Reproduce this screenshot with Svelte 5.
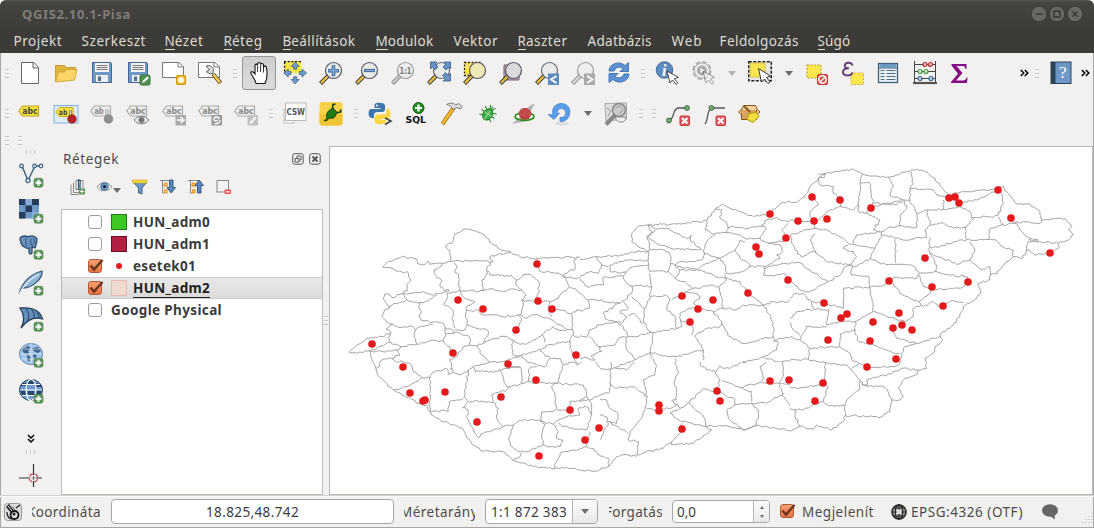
<script>
  // Stretches a label to a fixed advance width by adjusting its letter spacing.
  function fit(node, width) {
    const r = document.createRange();
    r.selectNodeContents(node);
    const natural = r.getBoundingClientRect().width;
    const n = node.textContent.length - (node.querySelector('span') ? 1 : 0);
    node.style.letterSpacing = (width - natural) / n + 'px';
  }

  const menu = [
    ['', 'P', 'rojekt', 48, 20], ['', 'S', 'zerkeszt', 64, 19], ['u', 'N', 'ézet', 39, 20], ['u', 'R', 'éteg', 39, 20],
    ['u', 'B', 'eállítások', 73, 20], ['u', 'M', 'odulok', 58, 20], ['', 'V', 'ektor', 44, 20], ['u', 'R', 'aszter', 50, 20],
    ['', 'A', 'datbázis', 64, 20], ['', 'W', 'eb', 30, 18], ['', 'F', 'eldolgozás', 79, 19], ['u', 'S', 'úgó', 33, 0]
  ];

  const plus = '<rect x="15" y="15.2" width="9" height="9" rx="2" fill="#5a9459" stroke="#417a41" stroke-width=".5"/><path d="M19.500 16.800v6M16.500 19.800h6" stroke="#fff" stroke-width="2"/>';
  const floppy = '<path d="M2.500 1.500h18l1 1v19h-19z" fill="#6f98c8" stroke="#416894"/><rect x="5" y="2" width="14" height="9" fill="#f4f4f4"/><path d="M6.500 4.500h11M6.500 6.500h11M6.500 8.500h11" stroke="#777" stroke-width="1"/><rect x="6" y="14" width="12" height="7" fill="#eee"/><rect x="8" y="15.500" width="3" height="4.500" fill="#4d6f97"/>';
  const lens = (glass, stroke, handle, inner) =>
    `<path d="M1.500 22.500L9 15" stroke="#333" stroke-width="4"/><path d="M2 22L8.800 15.200" stroke="${handle}" stroke-width="2.300"/><circle cx="14.500" cy="9.500" r="8" fill="${glass}" stroke="${stroke}" stroke-width="1.200"/>${inner}`;
  const tag = (fill, stroke, ink, t = 'abc') =>
    `<path d="M.8 9L4.500 4H20.500V14H4.500Z" fill="${fill}" stroke="${stroke}" stroke-width="1.200"/><text x="4.200" y="12.300" font-family="DejaVu Sans" font-weight="bold" font-size="8.600" textLength="${t === 'abc' ? 15.500 : 9.500}" lengthAdjust="spacingAndGlyphs" fill="${ink}">${t}</text>`;
  const gtag = (t) => tag('#eee', '#aaa', '#888', t);
  const cursor = '<path d="M12 10l3 12 2.500-3 3.500 4.300 1.800-1.500-3.500-4 4-1.500z" fill="#fff" stroke="#333" stroke-width=".9"/>';
  const err = '<rect x="14" y="14" width="9.500" height="9.500" rx="1" fill="#db5b60" stroke="#c33b42"/><path d="M16 16l5.500 5.500M21.500 16L16 21.500" stroke="#fff" stroke-width="2"/>';

  const I = {
    new: '<path d="M3.500 1.500H16L20.500 6.500V22.500H3.500Z" fill="#fff" stroke="#666"/><path d="M15 1.500V7H20.500" fill="#eee" stroke="#666"/>',
    open: '<path d="M1.500 20V4.500h9l2 2h9v3" fill="#e1b63e" stroke="#c99d31"/><path d="M1.500 21L4.500 11h6l2-2.500H23L20.500 19Z" fill="#fcd668" stroke="#d2a63a"/>',
    save: floppy,
    saveas: floppy + '<rect x="14" y="14" width="10" height="10" rx="1.500" fill="#4f8f50" stroke="#3b733d"/><path d="M16 22l1-2.500 4.500-4 1.500 1.500-4.500 4z" fill="#fff"/>',
    comp: '<path d="M.5 1.500H17L21.500 6V16.500H.5Z" fill="#fff" stroke="#777"/><path d="M16 1.500V6H21.500" fill="none" stroke="#777"/><rect x="14.500" y="14.500" width="9" height="9" rx="1" fill="#e5b31f" stroke="#c8960f"/><path d="M19 15.500v7M15.500 19h7M16.500 16.500l5 5M21.500 16.500l-5 5" stroke="#fff" stroke-width="1.300"/>',
    compmgr: '<path d="M.5 1.500H17L21.500 6V16.500H.5Z" fill="#fff" stroke="#777"/><path d="M16 1.500V6H21.500" fill="none" stroke="#777"/><path d="M15 13L22.500 22" stroke="#594a1b" stroke-width="4.200"/><path d="M15.500 13.500L22 21.500" stroke="#f0cb55" stroke-width="2.500"/><path d="M8 5l4-.5 3.500 3.500-.5 4-3 1-4-2.500 3.500-1.500z" fill="#ddd" stroke="#666"/>',
    hand: '<path d="M7.500 22.500C7 18 2.500 14 2.300 12c0-2 2.400-1.800 4.200 1V4.500c.3-1.800 2.300-1.800 2.600 0V2.800c.4-1.800 2.700-1.800 3 0V3.500c.5-1.500 2.600-1.300 2.900.4V6c.7-1.500 2.700-1 2.900.5C19 12 19 17 16.500 22.500Z" transform="translate(1.500 0)" fill="#fff" stroke="#111" stroke-width="1.100"/><path d="M10.600 5v6M13.600 4v7M16.500 6v5.500" stroke="#222" fill="none" stroke-width=".9"/>',
    pan: '<rect x="1" y="0" width="17" height="12" fill="#f8e54e"/><path d="M1 .7H18M1.600 1V12.500" stroke="#111" stroke-width="1.300" stroke-dasharray="2 1.700" fill="none"/><path d="M12.200 1l4 4.500h-2.500v2.700h-3V5.500H8.200zM12.200 23l4-4.500h-2.500v-2.700h-3v2.700H8.200zM.8 12l4.500-4v2.500H8v3H5.300V16zM23.500 12L19 8v2.500h-2.700v3H19V16z" fill="#6f99ca" stroke="#3e6793" stroke-width=".8"/>',
    zin: lens('#e8ebe8', '#556', '#f5c33b', '<path d="M14.500 4.200v11M9 9.700h11" stroke="#3c689b" stroke-width="3.600"/><path d="M14.500 5v9.400M9.700 9.700h9.600" stroke="#83a9d6" stroke-width="1.700"/>'),
    zout: lens('#e8ebe8', '#556', '#f5c33b', '<path d="M9 9.500h11" stroke="#3c689b" stroke-width="3.200"/><path d="M9.700 9.500h9.600" stroke="#83a9d6" stroke-width="1.400"/>'),
    z11: '<path d="M1.500 22.500L9 15" stroke="#888" stroke-width="4"/><path d="M2 22L8.800 15.200" stroke="#ccc" stroke-width="2.300"/><circle cx="14.500" cy="9.500" r="8" fill="#eee" stroke="#999" stroke-width="1.200"/><text x="8.500" y="12.600" font-family="DejaVu Sans" font-weight="bold" font-size="8" textLength="12" lengthAdjust="spacingAndGlyphs" fill="#777">1:1</text>',
    zfull: lens('#e8ebe8', '#667', '#f5c33b', '') + '<path d="M3.500 1h6.500L8 3l3 3-3 3-3-3-1.500 2zM23.500 1H17l2 2-3 3 3 3 3-3 1.500 2zM23.500 20H16l2.500-2.500-3-3 3-3 3 3 2-2z" fill="#6795c8" stroke="#3b658f" stroke-width=".9"/>',
    zsel: '<rect x="1.500" y="1.500" width="17" height="13" fill="#fbe64d" stroke="#222" stroke-width="1.300" stroke-dasharray="2 1.500"/>' + lens('#efe9b6', '#556', '#f5c33b', ''),
    zlay: '<path d="M5 4H20V19H5z" fill="#b9a7b5" stroke="#76616f"/>' + lens('#dcd9dc', '#556', '#f5c33b', ''),
    zlast: lens('#e8ebe8', '#667', '#f5c33b', '<rect x="13" y="12.500" width="11" height="11.500" fill="#5d8bbd"/><path d="M21.500 15l-5.500 3.500 5.500 3.500" stroke="#fff" stroke-width="1.900" fill="none"/>'),
    znext: '<path d="M1.500 22.500L9 15" stroke="#888" stroke-width="4"/><path d="M2 22L8.800 15.200" stroke="#ddd" stroke-width="2.300"/><circle cx="14.500" cy="9.500" r="8" fill="#eee" stroke="#999" stroke-width="1.200"/><rect x="13" y="12.500" width="11" height="11.500" fill="#aaa"/><path d="M16 15l5.500 3.500-5.500 3.500" stroke="#fff" stroke-width="1.900" fill="none"/>',
    refresh: '<path d="M2 10C2 3 12-1 18 4.500L21.500 1.500V10.500H13L16 7.500C12 4.500 8 7 7 10Z" fill="#5d92d2" stroke="#2f68ab" stroke-width=".8"/><path d="M22 13C22 20 12 24 6 18.500L2 21.500V12.500H11L8 15.500C12 18.500 16 16 17 13Z" fill="#5d92d2" stroke="#2f68ab" stroke-width=".8"/>',
    ident: '<circle cx="9.500" cy="9" r="8.300" fill="#5b8bbf" stroke="#47739f"/><text x="7" y="14.500" font-family="Liberation Serif" font-style="italic" font-weight="bold" font-size="16" fill="#fff">i</text>' + cursor,
    act: '<circle cx="11" cy="9.500" r="8.800" fill="none" stroke="#aaa" stroke-width="1.600" stroke-dasharray="4.600 2.300"/><circle cx="11" cy="9.500" r="7.600" fill="#eee" stroke="#aaa"/><circle cx="11" cy="9.500" r="5" fill="#aaa"/><path d="M9.500 7v5l4-2.500z" fill="#fff"/><g opacity=".5">' + cursor + '</g>',
    select: '<rect x=".8" y=".8" width="22.500" height="19" fill="#e6e6e6" stroke="#222" stroke-width="1.500" stroke-dasharray="3 1.500"/><rect x="2" y="2" width="15" height="14" fill="#fbe64d" stroke="#c9b02e" stroke-width=".7"/><path d="M10.500 7.500l3 13.500 3-3 3.500 4.500 2-1.500-3.500-4.500 4-1.500z" fill="#fff" stroke="#333"/>',
    desel: '<rect x="2" y="4" width="14" height="13" fill="#fde74c" stroke="#a8973b" stroke-dasharray="2 1.500"/><rect x="12.500" y="13.500" width="10" height="10" rx="1.500" fill="#db4b4b" stroke="#c33"/><circle cx="17.500" cy="18.500" r="3.700" fill="none" stroke="#fff" stroke-width="1.500"/><path d="M15 21l5-5" stroke="#fff" stroke-width="1.300"/>',
    expr: '<rect x="10" y="12" width="12.500" height="11.500" fill="#fde74c" stroke="#c8ae3c" stroke-dasharray="2 1.500"/><path d="M11.500 4.500C10.500.5 4 1 3.800 4.500c0 2 1.800 2.800 4.200 2.800C5 7.300 2 8.500 2 11c0 4.500 8.500 4.500 9.500.5" fill="none" stroke="#6b3d77" stroke-width="2"/>',
    table: '<rect x="1.500" y="2.500" width="19" height="19" fill="#e9f0f5" stroke="#3c627e" stroke-width="1.300"/><rect x="2.500" y="3" width="17" height="3.500" fill="#679bc6"/><path d="M2 7h19" stroke="#3c627e"/><path d="M3.500 9.500h4M3.500 12.500h4M3.500 15.500h4M3.500 18.500h4M9.500 9.500h9M9.500 12.500h9M9.500 15.500h9M9.500 18.500h9" stroke="#4e7187"/>',
    abacus: '<path d="M1.500 0v22M22.500 0v22M1.500 3.500h21M1.500 10.500h21M1.500 17.500h21" stroke="#444" fill="none"/><path d="M0 22h24" stroke="#555" stroke-width="2.200"/><g stroke-width="1.200"><g fill="#f4c4c4" stroke="#b52b2b"><circle cx="12" cy="3.500" r="2"/><circle cx="17.500" cy="3.500" r="2"/></g><g fill="#cfeecb" stroke="#479747"><circle cx="7" cy="10.500" r="2"/><circle cx="13" cy="10.500" r="2"/></g><g fill="#c0d9ef" stroke="#37678d"><circle cx="7" cy="17.500" r="2"/><circle cx="18" cy="17.500" r="2"/></g></g>',
    sum: '<path d="M2.500 3H17.500V8H16.500C16 5.500 15 5 13 5H7.500L13.500 12L7 19.500H14C16 19.500 17 18.500 17.500 16.500H18.500L18 22H2V21L9 12.800L2.500 4.500Z" fill="#850a85"/>',
    help: '<rect x="2" y="1" width="20" height="21.500" fill="#6d98c6" stroke="#2d455d"/><rect x="2" y="1" width="4.500" height="21.500" fill="#2b4257"/><text x="10" y="17" font-family="Liberation Serif" font-size="17" fill="#fff">?</text>',
    lab: tag('#f8e43c', '#c6a51c', '#444'),
    labpin: '<rect x="0" y="3.500" width="24" height="17.500" fill="#deebf8" stroke="#82b0e2"/><path d="M1.800 10L5.500 5.500H19V14.500H5.500Z" fill="#f8e43c" stroke="#c6a51c"/><text x="4.800" y="13" font-family="DejaVu Sans" font-weight="bold" font-size="7.500" textLength="8.500" lengthAdjust="spacingAndGlyphs" fill="#444">ab</text><path d="M16.500 8v7" stroke="#777" stroke-width="2.500"/><path d="M16.500 8.500v6" stroke="#ddd"/><circle cx="18" cy="17" r="4.300" fill="#b82323" stroke="#8a1212" stroke-width=".6"/>',
    glabpin: gtag('ab') + '<path d="M17 7v8" stroke="#999" stroke-width="3"/><path d="M17 7v8" stroke="#eee" stroke-width="1.200"/><circle cx="18.500" cy="17" r="4.700" fill="#8f8f8f"/>',
    glabeye: gtag('abc') + '<path d="M8 18c4-5 11-5 15 0-4 5-11 5-15 0z" fill="#eee" stroke="#777"/><circle cx="15.500" cy="18" r="3" fill="#777"/>',
    glabmov: gtag('abc') + '<rect x="13.500" y="13" width="10.500" height="10.500" fill="#aaa"/><path d="M15 18h6M18.500 15l3.500 3-3.500 3" stroke="#fff" stroke-width="1.600" fill="none"/>',
    glabrot: gtag('abc') + '<rect x="13.500" y="13" width="10.500" height="10.500" rx="1" fill="#999"/><path d="M21.500 17c-1-3-6-2.500-5.500.5.400 2 3 1.800 3.500.3M22 18c0 2.500-2 4-5.500 3.700" stroke="#fff" stroke-width="1.300" fill="none"/>',
    glabedit: gtag('abc') + '<rect x="13.500" y="13" width="10.500" height="10.500" fill="#c2c2c2"/><path d="M15.500 22l1-2.500 4.500-5 1.500 1.500-4.500 5z" fill="#fff"/>',
    csw: '<rect x="1" y="7" width="10" height="14" fill="#fff" stroke="#bbb"/><rect x="2.500" y="1" width="20.500" height="17.500" fill="#fff" stroke="#b9b9b9"/><text x="3.500" y="12.600" font-family="DejaVu Sans" font-size="8.500" font-weight="bold" textLength="18.500" lengthAdjust="spacingAndGlyphs" fill="#555">CSW</text>',
    plug: '<rect x=".5" y="0" width="23" height="23.500" rx="3" fill="#f6d24a"/><path d="M.5 12h23v8.500a3 3 0 0 1-3 3h-17a3 3 0 0 1-3-3z" fill="#efc535"/><path d="M5 18.500c2-.3 2.500-1.500 2.800-3C7 11.500 9 8.500 12.500 7l1-1.500 5 5.500-1.500 1.500c-1 3.500-4 4.500-6.500 3.500-1.200 1.700-3 3-5 2.700z" fill="#1d7a14" stroke="#0c3308" stroke-width=".9"/><path d="M13.500 6.500L14 2.500l2.500-.5M18 10.500l3.500-.5.500-2.500" fill="none" stroke="#153c10" stroke-width="1.600"/>',
    python: '<path d="M11 .7c-4 0-4.500 1.500-4.500 3.300v2h6v1H3.500C1.500 7 .5 9 .5 11.500S2 16 4 16h2v-3c0-2 1.500-3 3.500-3h5C16 10 17 9 17 7V4C17 1.500 15 .7 11 .7z" fill="#3c77ab"/><circle cx="9" cy="3.500" r="1" fill="#fff"/><path d="M18.500 6.500v3c0 2-1.500 3-3.500 3h-5c-2 0-3.500 1-3.500 3V19c0 2 2 3.300 5.500 3.300s6-1 6-3V18h-5v-1h6.500c2 0 3-2 3-4.500s-1-6-3-6z" fill="#fbd747"/><path d="M17 16l6 3-6 3.500" stroke="#444" stroke-width="1.600" fill="none"/>',
    sql: '<circle cx="14.500" cy="6" r="5.500" fill="#1f8c1f" stroke="#135f13"/><path d="M14.500 2.500v7M11 6h7" stroke="#fff" stroke-width="2.200"/><text x="1.500" y="20.500" font-family="DejaVu Sans" font-weight="bold" font-size="9.500" textLength="20.500" lengthAdjust="spacingAndGlyphs" fill="#111">SQL</text>',
    hammer: '<path d="M2.500 22L13.500 6" stroke="#a7740b" stroke-width="4"/><path d="M2.800 21.500L13.500 6" stroke="#f6b92b" stroke-width="2.500"/><path d="M6.500 2.500C10 .5 14 1 15.500 3l3-1.500 3.500 3L20.500 7 17 5.500 13 7.500C12 4.500 10 3.500 6.500 2.500z" fill="#ddd" stroke="#666" stroke-width=".8"/>',
    bug: '<g transform="rotate(35 12 12)"><path d="M5 7l4 2M4 12h5M5 17l4-2M19 7l-4 2M20 12h-5M19 17l-4-2M12 3v5M9 3l2 4M15 3l-2 4" stroke="#168420"/><ellipse cx="12" cy="12.500" rx="4.500" ry="6" fill="#46ad4c" stroke="#168420"/><path d="M12 8v10M8 12h8" stroke="#a1dfa2"/></g>',
    planet: '<path d="M0 22L13 19.500 23 1.500C18 3 14 6 12 11z" fill="#b6b6b6"/><circle cx="13" cy="12" r="6" fill="#bd3f3f"/><ellipse cx="12.500" cy="14.500" rx="9.500" ry="4" fill="none" stroke="#2e8e1f" stroke-width="1.700"/><path d="M6.500 12a6.500 6 0 0 1 13 0c0 4-13 4-13 0z" fill="#c24b4b"/>',
    undo: '<ellipse cx="14" cy="21.500" rx="7" ry="2" fill="#ddd"/><path d="M5 13C3 5 9 1 14 1.500 20 2 23 7 21.500 12.500 20.500 17.500 16 20 12 19.500V15.500C17 16 19 11.500 17 8.500 14 5 9 6.500 9 11.500L11.500 11 6 17.500 0 12.500z" fill="#5a9de8" stroke="#3b7bcb" stroke-width=".7"/>',
    gsearch: '<path d="M1 1.500L22.500 1V17L2 19z" fill="#ddd" stroke="#aaa"/><path d="M2 22.500L11 13" stroke="#888" stroke-width="4"/><circle cx="15" cy="8" r="6.500" fill="#ccc" stroke="#888" stroke-width="1.500"/><path d="M11 6l5-2 3 4-4 4M3 6l4 3-3 5" stroke="#999" fill="none"/><path d="M11 15h11c0 7-9 7-11 0z" fill="#eee" stroke="#888"/>',
    node1: '<path d="M3 18.500C9 17 6 7 12 6H21" stroke="#555" stroke-width="1.300" fill="none"/><circle cx="3" cy="18.500" r="2.400" fill="#75af78" stroke="#356d3a"/><circle cx="21" cy="6" r="2.400" fill="#75af78" stroke="#356d3a"/>' + err,
    node2: '<path d="M3 22C7 17 4 8 10 6H23" stroke="#555" stroke-width="1.300" fill="none"/><circle cx="9.500" cy="6" r="2.400" fill="#75af78" stroke="#356d3a"/>' + err,
    box: '<path d="M3.500 7.500h15v10h-15z" fill="#dba45e" stroke="#8d5010"/><path d="M3.500 8L5.500 3.500H17.500L19.500 8M3.500 7.500L.5 10 3.500 12.500M19.500 7.500l2.500 2.500-3 2.500" fill="#f2d5a3" stroke="#8d5010"/><path d="M6 4l6 6" stroke="#8f5c21" stroke-width="2.200"/><path d="M10.500 12l7.500-2 3 4.500-6 6-6-3z" fill="#f3df3c" stroke="#ad9313"/>',
    vec: '<path d="M3 3L9 17.500 16 3H22" stroke="#3f6284" stroke-width="1.500" fill="none"/><g fill="#dfeaf4" stroke="#3f6284" stroke-width="1.200"><circle cx="2.500" cy="3" r="1.800"/><circle cx="9" cy="17.500" r="2.100"/><circle cx="15.500" cy="3" r="1.800"/><circle cx="22" cy="3" r="1.800"/></g>' + plus,
    ras: '<rect y="0" width="20" height="19.500" fill="#6e99c9"/><path d="M0 0h6.500v6H0zM13 0h7v6h-7zM6.500 6.500H13v6.500H6.500zM0 13h6.500v6.500H0z" fill="#243d58"/><path d="M6.500 0H13v6H6.500zM13 13h7v6.500h-7z" fill="#88aed8"/>' + plus,
    pg: '<path d="M1 3C4 0 8 1 9 2c3-2 8-1 9 2 0 4-1 6-2 9l-3-1v6c-1 2-3 1-3-1v-4C7 14 6 12 6 12c-3 0-5-5-5-9z" fill="#6992bd" stroke="#2c4d6f" stroke-width="1.300"/><path d="M7 3c-1 4 0 6 1 8M12 4c-1 4 0 6 2 7M14 3c2 2 2 4 0 6" fill="none" stroke="#2c4d6f"/>' + plus,
    spl: '<path d="M0 23C3 12 9 4 23 0 24 7 14 17 4 17" fill="#8fb5d8" stroke="#3b5b7a" stroke-width="1.300"/><path d="M0 23C5 14 12 7 20 3" stroke="#e7f1fa" stroke-width="1.300" fill="none"/>' + plus,
    sail: '<path d="M1 1C12 0 21 3 23.500 12 15 9 8 13 2 21 6 14 5 7 1 1z" fill="#638ebb" stroke="#24425f" stroke-width="1.300"/><path d="M7 1.500c3 5 3 8 2 12M13 3c2 3 3 6 2 8M18 5.500c2 2 2 4 2 5" stroke="#24425f" fill="none"/>' + plus,
    wms: '<ellipse cx="12" cy="11" rx="11.500" ry="10.500" fill="#a9c8e9" stroke="#5a84b1"/><path d="M3 6l6-3 3 2-3 3 1 2-3 1-3-2zM8 12l3 1 1 2-2 4-2-3zM13 5l6-1 3 4-3 2-3-1-2-2zM14 11l4 1-2 4-2-3z" fill="#3f658b"/><path d="M1 11h22M12 0v21M2.500 6h19M2.500 16h19" stroke="#d5e4f4" stroke-width=".7"/>' + plus,
    wfs: '<ellipse cx="12" cy="11" rx="11.500" ry="10.500" fill="#6f9bcf" stroke="#203c57"/><path d="M4 4h4v3H2zM9 1h6v5H9zM17 4l4 1 2 3h-6zM1 11h6v5H3zM9 12h6v4H9zM17 11h6l-2 5h-4z" fill="#27486a"/><path d="M1 11h22M3 5.500h18M3 16.500h18" stroke="#fff" stroke-width="1.100"/><ellipse cx="12" cy="11" rx="5" ry="10.500" fill="none" stroke="#fff" stroke-width="1.100"/>' + plus,
    cross: '<path d="M0 14H11M17 14H23M14.500 0V11M14.500 17V23" stroke="#333" stroke-width="1.200"/><circle cx="14.500" cy="14" r="4.200" fill="none" stroke="#cc4545" stroke-width="1.300" stroke-dasharray="4.200 2.400" stroke-dashoffset="-1.200"/><path d="M14.500 12v4M12.500 14h4" stroke="#333" stroke-width=".6"/>',
    grp: '<path d="M1 5.500v10h8M3.500 3.500v10h8M6 1.500h7v9H6z" fill="none" stroke="#888"/><path d="M8.500 0v11M8.500 1c4 0 0 5 2 9" stroke="#37638c" stroke-width="1.300" fill="none"/><rect x="9" y="9.500" width="6" height="6" rx="1" fill="#5a9459"/><path d="M12 10.500v4M10 12.500h4" stroke="#fff"/>',
    vis: '<path d="M0 8C4 2 11 2 15 8 11 13 4 13 0 8z" fill="#eee" stroke="#999"/><circle cx="7.500" cy="7.500" r="3.800" fill="#6f9bc9" stroke="#4a6e93"/><circle cx="7.500" cy="7.500" r="1.500" fill="#111"/>',
    filt: '<path d="M1 3h14l-5 6v6l-3.500-1V9z" fill="#6e98c7" stroke="#416790"/><path d="M.5 1h14.500v3H.5z" fill="#f5da3a" stroke="#bda122" stroke-width=".6"/>',
    expd: '<path d="M0 1.500h11M2.500 2v12h2M2.500 6h2" stroke="#888" fill="none"/><path d="M4.500 4.500h2.500V7H4.500zM4.500 11h2.500v2.500H4.500z" fill="#fff3c4" stroke="#eb9d21" stroke-width="1.300"/><path d="M9.500 1h3.500v7.500h2.500L11.200 14 7 8.500h2.500z" fill="#5887b9" stroke="#345c84"/>',
    coll: '<path d="M0 1.500h11M2.500 2v12h2M2.500 6h2" stroke="#888" fill="none"/><path d="M4.500 4.500h2.500V7H4.500zM4.500 11h2.500v2.500H4.500z" fill="#fff3c4" stroke="#eb9d21" stroke-width="1.300"/><path d="M9.500 14h3.500V6.500h2.500L11.200 1 7 6.500h2.500z" fill="#5887b9" stroke="#345c84"/>',
    rem: '<rect x="1" y="1.500" width="11.500" height="11.500" fill="#f4f4f4" stroke="#888"/><rect x="8.500" y="10.500" width="6.500" height="4.500" rx="1" fill="#e34f4f"/><path d="M9.800 12.800h4" stroke="#fff" stroke-width="1.200"/>'
  };

  const row1 = ['|12', 'new', 'open', 'save', 'saveas', 'comp', 'compmgr', '|13', '*hand', 'pan', 'zin', 'zout', 'z11', 'zfull', 'zsel', 'zlay', 'zlast', 'znext', 'refresh', '|12', 'ident', 'act', '-21', 'select', 'v21', 'desel', 'expr', 'table', 'abacus', 'sum'];
  const row2 = ['|12', 'lab', 'labpin', 'glabpin', 'glabeye', 'glabmov', 'glabrot', 'glabedit', '|13', 'csw', 'plug', '|13', 'python', 'sql', 'hammer', 'bug', 'planet', 'undo', 'v20', 'gsearch', '|13', '|13', 'node1', 'node2', 'box'];
  const side = ['vec', 'ras', 'pg', 'spl', 'sail', 'wms', 'wfs'];
  const layers = [
    { name: 'HUN_adm0', w: 77, sw: '#3dc922', bd: '#23791a' },
    { name: 'HUN_adm1', w: 77, sw: '#b31f43', bd: '#661028' },
    { name: 'esetek01', w: 63, on: true, dot: true },
    { name: 'HUN_adm2', w: 77, on: true, sw: '#efd9d1', bd: '#ddbdb1', sel: true },
    { name: 'Google Physical', w: 111 }
  ];

  // Boundary lines, three units per pixel, grouped by map sheet with its own origin.
  // `area` is the part of the map that a sheet is responsible for.
  const sheets = [
    { id: 'west', area: 'M330 147H580V362H600V494H330Z', ox: 340, oy: 215, d: `128,156 140,144 165,133 187,124 205,130 228,131 232,145 252,150 264,138 269,148 306,145 332,139 440,137 450,145
332,139 330,108 317,92 336,85 344,57 370,42 400,47 425,56 447,72 457,86 470,92 490,106 510,110 540,125 575,130 640,128 690,126 745,131 780,125
510,112 455,122 450,132 460,140 445,152 440,165
128,156 150,158 175,170 202,170 213,197 199,210 202,228 188,235
133,238 150,240 162,248 172,238 188,235 205,236 250,230 280,240 296,236 326,224
133,238 130,252 143,270 147,280 133,285 125,304 140,322 157,327 138,341 152,352 135,362 113,368 80,370 55,388 28,412 50,415 88,407 120,395 150,382 145,368 152,352
188,235 200,254 193,260 172,266 150,272 147,280
200,254 220,262 240,262 262,258 290,240
240,262 238,282 245,290 237,305 252,318 278,322 310,325 315,338 338,345
326,224 322,245 310,268 328,276 340,295 335,310 345,340
157,327 180,338 215,333 228,345 240,335 278,328
228,345 222,365 230,387
315,338 318,360 310,378 270,377 230,388 185,395 150,382
338,345 343,355 320,355
344,352 360,355 388,365 392,378 388,390 370,395 350,425 330,432 335,450 337,465
310,378 320,390 330,395 332,415
306,145 300,155 282,165 285,178 305,195 300,215 322,228
342,142 350,160 345,172 357,180 355,205 362,232
440,165 440,180 425,195 432,222 420,228 362,228 326,235
440,165 450,180 475,178 495,185 515,182 530,195 528,210 545,225 558,240 545,255 550,270 545,285 540,300
420,225 450,222 490,230 520,222 545,225
362,232 375,250 405,262 383,272 380,285 400,290 415,285 430,300 465,300 490,305 520,303 545,300
380,285 378,310 382,330 375,345 345,345
382,330 410,340 440,343 445,355 432,378 430,385
545,300 560,310 580,298 625,310 635,315 660,330 680,343
530,195 550,178 572,178 590,195 597,200 595,235 592,258
591,130 590,145 597,160 607,172 640,172 670,184 680,195 688,215 660,240 655,250 632,260 610,260 592,258
688,215 700,220 720,235 745,252 745,275 710,285 695,295 697,345
592,258 560,258 545,255
632,260 625,285 635,305
632,285 660,285 695,295
670,184 690,165 705,163 702,140 712,130
670,184 700,190 720,187 745,210 740,235 780,225
697,345 660,347 640,335 620,345 605,360 615,382
697,345 700,360 690,375 690,400 700,420 712,450 725,440 750,430 780,430
700,360 725,368
520,360 530,345 545,315 535,300
430,385 460,370 500,363 520,375 540,388 570,382 605,360
388,390 412,392 430,385
412,392 425,420 450,442 500,437 545,420 590,408 625,390 690,380
520,375 515,400 520,420 545,422
450,442 420,450 400,455 405,470 440,468 460,472 478,465 500,460 540,455
330,460 340,472 360,480 385,465 400,455
185,395 170,405 180,420 155,430 170,440 190,440 215,450 218,465 245,488 270,488
88,407 95,430 108,460 118,455 125,435 155,430
88,407 130,410 170,405
108,460 112,480 135,500 160,525 185,540 205,548 235,565 262,575 275,600 300,615 340,630 368,640 378,660 392,680 420,705 455,710 490,710 510,725 520,738 560,748 600,757 645,760 680,757 720,765 765,768 805,755
160,525 200,515 245,488
270,488 270,520 268,570 270,590 325,588 328,560 370,550
270,488 280,470 320,460 325,478 340,472
385,465 380,500 372,545 385,560 425,558 460,562
385,560 368,578 385,585 382,610 405,655 415,668 430,655 490,635
460,562 455,540 480,530 500,525 510,515
478,465 490,490 500,515 530,512 545,505 545,470 540,455 520,455 500,460
460,562 475,580 470,610 490,635 520,630
545,422 560,440 590,448 615,455 630,430 600,408
630,430 660,430 670,450 660,475 655,500
670,450 700,440 712,450
545,505 567,500 568,460 590,455
567,500 585,505 650,505 730,510 740,545 720,560
655,500 635,515 645,545 650,580 640,590 605,590 600,620
520,630 540,615 600,615 615,628 605,665 608,690 580,700 565,710 535,710 510,690 508,665 520,630
520,735 540,725 545,712
600,620 640,628 655,615 690,602 720,600 715,580 740,575
640,628 655,650 650,670 668,675 660,695 630,695 608,690
655,625 690,640 740,645 755,600 740,575
650,585 690,585 690,560 750,555 780,540
740,545 755,570 755,600
750,650 740,695 700,705 660,715 650,740 640,760
740,695 760,700 775,720 805,730
765,440 775,455 815,460` },
    { id: 'mid', area: 'M580 147H790V362H580Z', ox: 560, oy: 150, d: `40,329 60,328 110,320 150,318 190,315 215,305 265,305 245,295 215,275 215,250 235,228 265,225 350,222 440,212 465,178 490,163 510,175 540,185 560,192 580,200 630,192 660,160 690,155
265,225 290,238 320,235 350,250 380,265 395,255 390,270 410,290 425,300
265,225 275,245 260,262 268,285 265,305
285,240 262,262 300,285 340,297 425,300
440,212 435,240 465,252 500,248 505,230 495,215 480,205 485,180 465,178
465,252 440,275 430,300 435,312 425,330 385,335 360,335 345,345
500,230 560,235 605,230 620,210 650,202 680,215 690,213
500,248 540,255 555,265 600,265 620,235 605,225
555,275 540,270 525,300 490,320
525,300 540,325 560,335 570,350 545,365 500,370 495,345 480,325
430,305 450,318 480,325 490,320
600,265 625,280 670,275 675,250 665,240 685,220
625,280 660,285 668,305 650,315 660,325 640,335 615,350 570,350
615,350 610,375 640,378 670,370 690,390
610,355 640,345 690,340
265,305 265,350 270,365 325,365 332,345 330,310 300,298 270,300
265,330 200,330 150,345 150,365 180,370 200,365 220,350 265,345
110,320 125,345 145,350
40,365 60,378 90,365 115,370 125,345
130,382 190,378 200,365
190,380 200,400 215,408 275,410 270,370
215,408 215,430 180,460 110,450 85,450
130,382 130,405 105,405 80,410 60,385
85,450 60,430 30,410
85,450 88,475 40,490
40,555 80,562 88,540 120,525 170,515 185,525 205,560 220,560 275,548
180,460 150,475 130,490 135,505 185,520 200,500 180,485 205,475 190,455
215,440 255,478
205,498 220,490 250,520
275,410 270,440 255,475 250,510 270,545 280,548
270,440 320,437 330,450 320,480 345,500 350,535 280,548
325,365 345,385 380,400 398,415 415,415 450,405 475,410 485,440 490,475 460,485
345,350 360,360 345,385
360,360 410,358 440,370 495,385 540,395 565,430 610,465
332,340 360,350 410,358 440,340 480,325
398,415 370,430 335,450
375,425 398,428 420,440 400,460 415,475 385,475 360,490 362,510 390,520 400,535 395,555
415,475 460,485 485,515 480,530 440,535 405,558 430,600
350,535 365,530 362,510
485,520 510,560 545,580 580,575 610,565 640,560 640,520 625,490 610,465 550,465 530,478 490,475
495,370 500,390 478,410
610,465 640,455 685,455 705,430
430,600 350,620 330,620 270,608
280,548 278,580 270,608 225,628 200,600 200,562
270,608 290,650
640,560 655,580 650,600 610,620 580,630 540,640
430,630 430,600
610,620 650,635 720,628
640,575 655,565 720,560
88,560 115,590 165,585 175,565 205,560
40,625 75,622 105,630 95,615 125,605 115,590
200,640 225,628
345,625 355,665` },
    { id: 'south', area: 'M600 362H790V494H600Z', ox: 500, oy: 360, d: `335,-5 330,45 330,95 300,105 285,110 250,125
330,70 345,85 400,80 415,92 440,110
345,25 380,30 410,0
295,25 335,27 380,8 405,-2
450,-22 470,20 465,45 430,60 442,110 435,150 415,185 390,220 385,240 415,245 410,285
440,145 470,150 520,140 535,130
525,-5 535,35 525,60 530,120 515,122 540,145 565,128 610,85 640,95
540,145 510,160 545,185 570,188 620,200 615,175 565,128
610,0 600,15 620,30 645,35
760,0 720,10 690,25 675,25 660,18 645,35
645,35 660,60 650,90 680,110 705,118 705,135
665,60 720,82 755,95 755,125
720,82 780,68 790,55 780,20 800,5
850,0 850,40 840,70
785,68 840,72 870,75
838,75 850,110 885,150 885,178 895,198
850,100 800,130 755,130 705,135
705,135 680,150 685,175 730,210 770,195 775,150 755,130
285,333 325,320 350,290 375,283 408,290 440,275 490,265 515,245 515,255 580,250 635,210 620,200 680,197 730,210 770,197 830,205 870,213 900,198
515,245 540,220 545,190
290,115 320,120 330,145 355,160 350,190 325,185 385,220
300,165 320,170 325,190 310,215 300,240 275,240
265,125 270,150 290,165
275,240 280,260 290,285 325,295 325,320` },
    { id: 'east', area: 'M790 147H1092V494H790Z', ox: 790, oy: 150, d: `-30,160 0,155 20,157 50,130 60,110 85,85 100,70 145,65 190,57 215,70 250,78 290,82 320,75 350,65 380,57 400,62 435,85 460,118 475,135 520,125 600,120 640,108 650,125 680,162 720,162 745,180 755,210 825,205 845,230 835,240 850,255 830,272 805,280 750,275 715,270
805,280 808,292 780,310 740,315 710,300 698,325 670,320 640,345 620,372 600,375 600,390 565,400 572,430 545,455 520,470 510,500 490,525 450,555 458,570 435,590 430,610 405,625 410,655 385,660 380,675 345,685 325,715 340,740 330,750 305,750 300,785 265,803 220,797 165,797 160,815 125,840 80,825 70,838 30,828 0,843 -30,835
710,300 715,275 745,270
85,75 107,72 103,82 85,83 90,105 130,110 130,130 150,150 155,170 190,180 205,165 210,100 215,70
210,100 240,100 243,130 250,155 243,175 230,190 205,185 205,165
155,170 110,185 90,205 70,215 60,200 65,180 85,165 75,145
-10,210 20,212 72,213 75,235 110,240 160,265 175,280 200,285 255,295
75,235 40,240 0,258 15,300 35,322 65,305 80,310 60,270 75,250
80,310 110,335 180,345 200,320 190,305 160,295 175,285
243,175 285,160 340,150 360,150
250,160 300,165 340,155
295,82 310,105 300,135 340,150 350,175 330,200 330,228 380,232 380,190 360,150 360,115 370,100 365,65
230,190 270,210 250,240 275,245 300,230 330,228
275,245 275,260 255,295 240,325 200,350 185,345
190,280 200,255 250,250 270,243
275,255 310,262 340,270 410,262 405,240 420,225 410,180 380,190
360,115 430,120 440,135 475,140
410,180 460,178 510,170 540,185 550,205 530,230 490,235 460,218 420,225
460,150 460,178
510,160 560,150 600,130 620,122
545,205 580,198 610,202 625,195 640,160 630,125
525,230 530,270 490,275 445,292 420,292 418,262
530,270 615,268 635,290 670,300 665,320
595,268 600,235 640,225 680,220 700,250 720,265 745,270
625,200 640,225
660,215 750,220 755,210
418,292 420,310 460,325 500,343 540,330 555,300 540,275
540,330 575,360 600,350 603,375
315,268 318,340
240,325 270,340 365,345 388,370 380,385 310,383 300,395 275,408 240,412
388,370 440,365 500,380 520,375 545,395 510,415 430,418 400,410 385,375
420,310 440,345 437,365
310,400 330,430 385,455 420,430 425,410
385,455 400,470 430,455 445,470 490,452 520,458
240,412 235,378 185,375 185,345 165,350 150,375 115,395 60,425 30,420 0,390
0,340 30,338 60,360 115,395
240,412 160,415 160,475 100,458 65,455 40,430 15,430 -5,450
240,412 250,485 195,515 150,515 110,525 115,480 70,475 65,455
250,485 345,515 370,500 370,475 395,465
195,515 195,540 205,575 245,582 290,600 330,612
195,540 150,552 150,590 180,610 185,630 240,652 310,650 330,640 335,610 345,590 380,580 450,558
310,545 320,565 380,580
150,590 60,595 30,570 50,530 110,530
60,595 55,628 105,638 165,645 185,660 210,690 210,715 175,745 165,765 165,797
105,638 105,700 115,710 100,755 120,768 165,765
0,630 55,628
185,655 205,640
230,690 300,672 335,655 385,660
210,695 230,710 230,690
215,705 285,712 305,750
-25,705 20,715 50,712 105,700
0,778 40,780 100,755
15,780 15,800 30,828
30,570 0,560 -35,560
-5,510 20,485 70,478
-5,510 10,540 30,555` }
  ];

  let seed = 7;
  const rnd = () => ((seed = (seed * 16807) % 2147483647) / 2147483647) - 0.5;

  // Breaks every stretch into short crooked steps so that borders look surveyed.
  function rough(line) {
    const p = line.trim().split(' ').map((s) => s.split(',').map(Number));
    let out = 'M' + p[0].join(' ');
    for (let i = 1; i < p.length; i++) {
      const [a, b] = p[i - 1];
      const [c, d] = p[i];
      const len = Math.hypot(c - a, d - b);
      const n = Math.max(1, Math.round(len / 7));
      for (let k = 1; k < n; k++) {
        const t = k / n;
        out += `L${(a + (c - a) * t + rnd() * 6).toFixed(1)} ${(b + (d - b) * t + rnd() * 6).toFixed(1)}`;
      }
      out += `L${c} ${d}`;
    }
    return out;
  }
  const land = sheets.map((s) => ({ ...s, path: s.d.split('\n').map(rough).join('') }));

  const cases = [
    [537, 264], [458, 300], [483, 309], [538, 301], [552, 309], [516, 330], [372, 344], [453, 353], [403, 367], [508, 364],
    [576, 355], [536, 380], [410, 393], [423, 401], [425, 400], [445, 392], [501, 397], [477, 422], [570, 410], [599, 428], [585, 440],
    [539, 456], [770, 214], [798, 221], [814, 221], [827, 219], [812, 197], [840, 200], [871, 208], [786, 238], [756, 247],
    [759, 254], [788, 280], [748, 293], [713, 300], [682, 296], [698, 309], [690, 322], [717, 391], [720, 401], [659, 405],
    [659, 411], [682, 429], [770, 381], [789, 380], [823, 383], [815, 401], [949, 198], [955, 197], [959, 203], [998, 190],
    [1011, 218], [1050, 253], [925, 258], [889, 281], [932, 287], [968, 282], [943, 306], [824, 303], [841, 318], [847, 314],
    [899, 313], [873, 322], [893, 328], [902, 325], [912, 330], [828, 340], [870, 341], [896, 359], [867, 367]
  ];
</script>

{#snippet icon(name, size = 24)}
  <svg width={size} height={size} viewBox="0 0 {size} {size}">{@html I[name]}</svg>
{/snippet}

{#snippet tools(items)}
  {#each items as it}
    {#if it[0] === '|'}
      <span class="grip" style="width:{it.slice(1)}px"><i></i></span>
    {:else if it[0] === 'v' && it.length < 4 || it[0] === '-'}
      <span class="drop" class:dim={it[0] === '-'} style="width:{it.slice(1)}px"><i></i></span>
    {:else}
      <span class="btn" class:pressed={it[0] === '*'}>{@render icon(it.replace('*', ''))}</span>
    {/if}
  {/each}
{/snippet}

{#snippet check(on)}
  <span class="check" class:on>
    {#if on}<svg width="18" height="16" viewBox="0 0 18 16"><path d="M3.500 7.500l3.500 4L15.500 2" fill="none" stroke="#6b3621" stroke-width="2.500" /></svg>{/if}
  </span>
{/snippet}

{#snippet more()}
  <svg width="9" height="8" viewBox="0 0 9 8"><path d="M.8 1l3 3-3 3M4.800 1l3 3-3 3" fill="none" stroke="#000" stroke-width="1.500" /></svg>
{/snippet}

<div class="window">
  <div class="title">
    <b use:fit={109}>QGIS2.10.1-Pisa</b>
    <span class="wbtns">
      <svg width="54" height="18" viewBox="0 0 54 18">
        <g fill="#6a6863" stroke="#31302c" stroke-width=".7"><circle cx="8" cy="9" r="7.700" /><circle cx="26" cy="9" r="7.700" /><circle cx="44" cy="9" r="7.700" /></g>
        <path d="M4.500 9h7M23 6h6v6h-6zM41.500 6.500l5 5M46.500 6.500l-5 5" fill="none" stroke="#34332f" stroke-width="1.300" />
      </svg>
    </span>
  </div>
  <div class="menu">
    {#each menu as [u, a, rest, w, gap]}
      <span class="mi" style="width:{w + gap}px"><span use:fit={w}><span class:u={u}>{a}</span>{rest}</span></span>
    {/each}
  </div>
  <div class="bar">
    {@render tools(row1)}
    <span class="end">{@render more()}<span class="grip g2"><i></i></span><span class="btn">{@render icon('help')}</span>{@render more()}</span>
  </div>
  <div class="bar second">{@render tools(row2)}</div>
  <div class="strip"><span class="grip g3"><i></i></span><span class="grip g4"><i></i></span></div>

  <div class="main">
    <div class="side">
      <span class="hgrip"></span>
      {#each side as s}<span class="btn">{@render icon(s)}</span>{/each}
      <svg class="down" width="8" height="10" viewBox="0 0 8 10"><path d="M1 1l3 3 3-3M1 5l3 3 3-3" fill="none" stroke="#000" stroke-width="1.500" /></svg>
      <span class="hgrip low"></span>
      <span class="btn">{@render icon('cross')}</span>
    </div>
    <div class="dock">
      <div class="dtitle">
        <span use:fit={56}>Rétegek</span>
        <svg width="29" height="12" viewBox="0 0 29 12"><g fill="none" stroke="#555"><rect x=".7" y=".7" width="10.500" height="10.500" rx="2" /><rect x="17.700" y=".7" width="10.500" height="10.500" rx="2" /><path d="M3 5.500h4v3.500H3zM5 5.500V3h4v4H7" /><path d="M20.500 3.500l5 5M25.500 3.500l-5 5" stroke-width="2" /></g></svg>
      </div>
      <div class="dtools">
        {@render icon('grp', 16)}
        <span class="eye">{@render icon('vis', 16)}<i></i></span>
        {@render icon('filt', 16)}{@render icon('expd', 16)}{@render icon('coll', 16)}{@render icon('rem', 16)}
      </div>
      <div class="tree">
        {#each layers as l}
          <div class="layer" class:sel={l.sel}>
            {@render check(l.on)}
            {#if l.dot}<span class="dot"><i></i></span>{:else if l.sw}<span class="swatch" style="background:{l.sw};border-color:{l.bd}"></span>{/if}
            <b use:fit={l.w}>{l.name}</b>
          </div>
        {/each}
      </div>
    </div>
    <div class="split"><span class="grip g5"><i></i></span></div>
    <div class="map">
      <svg width="762" height="347" viewBox="330 147 762 347">
        {#each land as s}
          <clipPath id={s.id}><path d={s.area} /></clipPath>
          <g clip-path="url(#{s.id})">
            <path d={s.path} transform="translate({s.ox} {s.oy}) scale(.33333)" fill="none" stroke="#a0a0a0" stroke-width="2.900" stroke-linejoin="round" />
          </g>
        {/each}
        {#each cases as [x, y]}<circle cx={x} cy={y} r="3.800" fill="#e31a1c" />{/each}
      </svg>
    </div>
  </div>

  <div class="status">
    <svg class="mouse" width="18" height="18" viewBox="0 0 18 18"><rect x=".5" y=".5" width="17" height="17" rx="3" fill="#ddd" stroke="#999" /><path d="M2 4l3-3 5 4 2 5-4 1z" fill="#222" /><path d="M4 3l4 5M6 2l4 5" stroke="#eee" /><circle cx="10.500" cy="12" r="4" fill="#ddd" stroke="#111" stroke-width="1.800" /><circle cx="10" cy="11" r="1.500" fill="#222" /><path d="M3 9c0 4 2 7 6 7M12 5l4-3" stroke="#222" stroke-width="1.300" fill="none" /></svg>
    <span class="clip c1"><span use:fit={74}>Koordináta</span></span>
    <span class="field coord"><span use:fit={93}>18.825,48.742</span></span>
    <span class="clip c2"><span use:fit={78}>Méretarány</span></span>
    <span class="field combo"><span use:fit={76}>1:1 872 383</span><em><i></i></em></span>
    <span class="clip c3"><span use:fit={58}>Forgatás</span></span>
    <span class="field spin"><span use:fit={19}>0,0</span><em><i class="up"></i><i></i></em></span>
    <span class="scheck">{@render check(true)}</span>
    <span class="show"><span use:fit={72}>Megjelenít</span></span>
    <svg class="globe" width="16" height="16" viewBox="0 0 16 16"><circle cx="8" cy="8" r="7" fill="#aaa" stroke="#222" stroke-width="1.500" /><path d="M1 8h14M8 0v16M3 4h10M3 12h10" stroke="#222" stroke-width="1.100" /><ellipse cx="8" cy="8" rx="3.800" ry="7" fill="none" stroke="#222" stroke-width="1.100" /><rect x="5.500" y="5.500" width="5" height="4.500" fill="#ddd" /></svg>
    <span class="epsg"><span use:fit={112}>EPSG:4326 (OTF)</span></span>
    <svg class="bubble" width="17" height="16" viewBox="0 0 17 16"><ellipse cx="8" cy="6.500" rx="8" ry="6.200" fill="#666" /><path d="M8 12l5 3.500-.5-5z" fill="#666" /></svg>
    <svg class="size" width="12" height="12" viewBox="0 0 12 12"><path d="M10 1v1M7 4v1M10 4v1M4 7v1M7 7v1M10 7v1M1 10v1M4 10v1M7 10v1M10 10v1" stroke="#bbb" stroke-width="1.200" /></svg>
  </div>
</div>

<style>
  :global(body) { background: #fff; }
  .window {
    width: 1094px; height: 528px; box-sizing: border-box; overflow: hidden; display: flex; flex-direction: column;
    background: #f2f1f0; color: #4c4c4c; border-radius: 6px 6px 0 0; white-space: nowrap;
    font-family: "Noto Sans", "Open Sans", sans-serif; font-size: 13.5px; box-shadow: inset 1px 0 #a8a6a3, inset -1px 0 #a8a6a3, inset 0 -1px #a8a6a3;
  }
  .window span, .window b { flex: none; }
  .title { height: 27px; display: flex; align-items: center; justify-content: space-between; padding: 1px 9px 0 22px; background: linear-gradient(#55534c 0 1px, #45443f 2px, #3e3d39); color: #807d78; box-sizing: border-box; }
  .title b { font-size: 13px; }
  .wbtns { display: flex; }
  .menu { height: 26px; display: flex; align-items: center; padding-left: 13.5px; background: #3c3b37; color: #dfdbd2; line-height: 18px; }
  .mi { display: block; margin-top: 2px; }
  .u { display: inline-block; line-height: 15px; border-bottom: 1px solid #dfdbd2; letter-spacing: 0; }
  .bar { height: 40px; flex: none; display: flex; align-items: center; }
  .second { height: 41px; }
  .btn { width: 36px; height: 36px; display: flex; align-items: center; justify-content: center; box-sizing: border-box; }
  .pressed { width: 34px; height: 34px; margin: 0 1px; background: linear-gradient(#d0cecc, #dddbd9); border: 1px solid #989593; border-radius: 3px; }
  .btn svg, .dtools svg { display: block; overflow: visible; }
  .grip { display: flex; align-items: center; justify-content: center; }
  .grip i { width: 4px; height: 9px; background: repeating-linear-gradient(#c6c4c1 0 1px, #fff 1px 2px, transparent 2px 4px); }
  .bar > .grip:first-child { padding-left: 2px; box-sizing: border-box; }
  .drop { display: flex; justify-content: center; }
  .drop i, .eye i, em i { border: 4px solid transparent; border-top: 5px solid #706e6b; border-bottom: 0; }
  .dim i { border-top-color: #b5b3b1; }
  .end { margin-left: auto; padding-right: 4px; display: flex; align-items: center; }
  .end .btn { margin-right: 2px; }
  .g2 { width: 14px; padding-left: 1px; box-sizing: border-box; }
  .strip { height: 12px; flex: none; display: flex; padding-left: 5px; }
  .g3 { width: 4px; margin-right: 9px; }
  .g4 { width: 4px; }
  .main { height: 349px; flex: none; display: flex; }
  .side { width: 61px; display: flex; flex-direction: column; align-items: center; box-sizing: border-box; padding-top: 4px; }
  .hgrip { width: 9px; height: 4px; margin-bottom: 3px; background: repeating-linear-gradient(90deg, #c6c4c1 0 1px, #fff 1px 2px, transparent 2px 4px); }
  .down { margin: 25px 0 6px 1px; }
  .low { margin-bottom: 4px; }
  .dock { width: 262px; display: flex; flex-direction: column; }
  .dtitle { height: 26px; display: flex; align-items: center; justify-content: space-between; padding: 0 2px 0 2px; }
  .dtools { height: 30px; display: flex; align-items: center; gap: 12px; padding-left: 9px; }
  .dtools > svg:first-child { margin-right: -1px; }
  .eye { display: flex; align-items: center; width: 24px; margin-right: -1.5px; }
  .eye i { margin-top: 6px; }
  .tree { flex: 1; margin-top: 7px; background: #fff; border: 1px solid #bdbbb7; padding-top: 1px; margin-bottom: 0; }
  .layer { height: 22px; box-sizing: border-box; display: flex; align-items: center; padding-left: 26px; color: #3c3c3c; border: 0 solid #cfcdcb; }
  .sel { background: linear-gradient(#eae9e8, #dcdad8); border-width: 1px 0; color: #222; }
  .sel b { box-shadow: 0 1px #222; line-height: 18px; }
  .layer b { font-size: 13.5px; line-height: 17px; }
  .check { width: 14px; height: 14px; box-sizing: border-box; border: 1px solid #a09d9a; border-radius: 3px; background: #fff; margin-right: 9px; margin-top: -1px; display: flex; }
  .check.on { background: linear-gradient(#f7a06f, #ed7442); border-color: #ae5a38; }
  .check svg { flex: none; margin: -2px 0 0 -2px; }
  .swatch { width: 16px; height: 16px; box-sizing: border-box; border: 1px solid; margin-right: 6px; margin-top: -1px; }
  .dot { width: 16px; margin-right: 6px; margin-top: -1px; display: flex; justify-content: center; }
  .dot i { width: 6px; height: 6px; border-radius: 50%; background: #e31a1c; }
  .split { width: 6px; display: flex; align-items: center; justify-content: center; }
  .map { flex: 1; background: #fff; border: 1px solid #bdbbb7; margin-right: 1px; overflow: hidden; }
  .map svg { display: block; }
  .status { flex: 1; display: flex; align-items: center; padding-left: 4px; box-shadow: inset 0 1px #d4d1ce, inset 0 2px #fbfafa; line-height: 20px; }
  .status svg { flex: none; }
  .clip { overflow: hidden; display: flex; }
  .c1 { width: 69px; margin: 0 10px 0 10px; }
  .c1 > span { margin-left: -5px; }
  .c2 { width: 71px; margin: 0 10px; }
  .c2 > span { margin-left: -4px; }
  .c3 { width: 53px; margin: 0 10px 0 11px; }
  .c3 > span { margin-left: -4px; }
  .field { height: 25px; box-sizing: border-box; border: 1px solid #a9a6a2; border-radius: 4px; background: #fff; display: flex; align-items: center; color: #3c3c3c; overflow: hidden; }
  .coord { width: 283px; justify-content: center; }
  .combo { width: 113px; padding-left: 5px; justify-content: space-between; }
  .spin { width: 98px; padding-left: 4px; justify-content: space-between; height: 23px; }
  em { width: 24px; height: 100%; border-left: 1px solid #b5b2af; background: linear-gradient(#fcfcfc, #ebe9e8); display: flex; flex-direction: column; align-items: center; justify-content: center; }
  .spin em { width: 15px; gap: 6px; }
  .spin em i { border-width: 3px 2.5px 0; }
  .spin em .up { border-top: 0; border-bottom: 3px solid #706e6b; }
  .scheck { margin-left: 10px; width: 22px; }
  .show { width: 89px; }
  .epsg { margin-left: 4px; width: 131px; }
  .size { margin: 12px 0 0 23px; }
</style>
